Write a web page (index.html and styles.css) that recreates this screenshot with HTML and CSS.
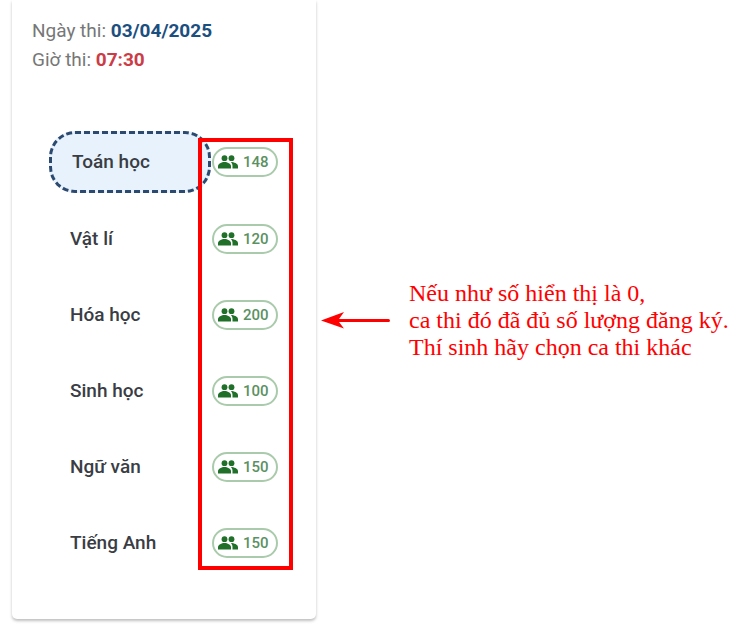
FILE: index.html
```
<!DOCTYPE html>
<html lang="vi">
  <head>
    <meta charset="utf-8">
    <title>Ca thi</title>
    <link rel="stylesheet" href="styles.css">
  </head>
  <body>
    <svg class="sprite" aria-hidden="true">
      <symbol id="people" viewBox="0 0 20 14">
        <circle cx="6.500" cy="3.200" r="2.900"/>
        <circle cx="13.500" cy="3.200" r="2.900"/>
        <path d="M0 13.500v-2.500c0-2.300 3.600-4 6.500-4s6.500 1.700 6.500 4v2.500z"/>
        <path d="M12.800 7c3.200 0 7.200 1.600 7.200 4v2.500h-5.500v-2.500c0-1.700-.6-2.900-1.700-4z"/>
      </symbol>
    </svg>
    <main>
      <section class="card">
        <p class="info">Ngày thi: <b class="date">03/04/2025</b></p>
        <p class="info">Giờ thi: <b class="time">07:30</b></p>
        <ul class="subjects">
          <li>
            <button class="subject selected">Toán học</button>
            <span class="slots"><svg class="icon"><use href="#people"/></svg>148</span>
          </li>
          <li>
            <button class="subject">Vật lí</button>
            <span class="slots"><svg class="icon"><use href="#people"/></svg>120</span>
          </li>
          <li>
            <button class="subject">Hóa học</button>
            <span class="slots"><svg class="icon"><use href="#people"/></svg>200</span>
          </li>
          <li>
            <button class="subject">Sinh học</button>
            <span class="slots"><svg class="icon"><use href="#people"/></svg>100</span>
          </li>
          <li>
            <button class="subject">Ngữ văn</button>
            <span class="slots"><svg class="icon"><use href="#people"/></svg>150</span>
          </li>
          <li>
            <button class="subject">Tiếng Anh</button>
            <span class="slots"><svg class="icon"><use href="#people"/></svg>150</span>
          </li>
        </ul>
      </section>
      <aside class="note">
        <svg class="arrow" viewBox="0 0 69 18">
          <path d="M0 9.500L23 1l-5 7h49.500a1.500 1.500 0 0 1 0 3H18l5 6.500z"/>
        </svg>
        <p>Nếu như số hiển thị là 0,<br>ca thi đó đã đủ số lượng đăng ký.<br>Thí sinh hãy chọn ca thi khác</p>
      </aside>
    </main>
  </body>
</html>
```
FILE: styles.css
```
body {
  margin: 0;
  background: #fff;
  font-family: Roboto, "Liberation Sans", sans-serif;
}
main {
  display: grid;
  grid-template-columns: minmax(304px, 41%) 1fr;
  align-items: center;
  padding: 0 0 7px 12px;
}
p {
  margin: 0;
}
.sprite {
  display: none;
}
.card {
  padding: 16px 20px 46px;
  border-radius: 0 0 5px 5px;
  box-shadow: 0 2px 3px rgba(0,0,0,0.25);
}
.info {
  font-size: 19px;
  line-height: 29px;
  color: #777;
}
.date {
  color: #1b4f80;
}
.time {
  color: #cc3c46;
}
.subjects {
  position: relative;
  display: flex;
  flex-direction: column;
  gap: 16px;
  margin: 57px 0 0 17px;
  padding: 0;
  list-style: none;
}
/* red frame over the column with free slots */
.subjects::after {
  content: "";
  position: absolute;
  top: 7px;
  bottom: 3px;
  left: 149px;
  width: 87px;
  border: 4px solid #f00;
  pointer-events: none;
}
.subjects li {
  display: flex;
  align-items: center;
  gap: 1px;
}
.subject {
  width: 162px;
  padding: 19px 20px;
  border: 1px solid transparent;
  border-radius: 26px;
  background: none;
  font: 500 19px/20px Roboto, "Liberation Sans", sans-serif;
  text-align: left;
  color: #3a3d44;
  cursor: pointer;
}
.selected {
  padding: 18px 20px;
  border: 3px dashed #2c4a70;
  background: #e7f2fd;
}
.slots {
  display: flex;
  align-items: center;
  box-sizing: border-box;
  gap: 5px;
  width: 66px;
  height: 30px;
  padding-left: 4px;
  border: 2px solid #a9cbab;
  border-radius: 15px;
  font-size: 15px;
  font-weight: 500;
  color: #5a9162;
}
.icon {
  width: 20px;
  height: 14px;
  fill: #20702a;
}
.note {
  display: flex;
  align-items: center;
  gap: 19px;
  padding: 21px 0 0 5px;
  font: 24px/27px "Liberation Serif", serif;
  color: #f00;
  white-space: nowrap;
}
.arrow {
  flex: none;
  width: 69px;
  height: 18px;
  fill: #f00;
}
```
